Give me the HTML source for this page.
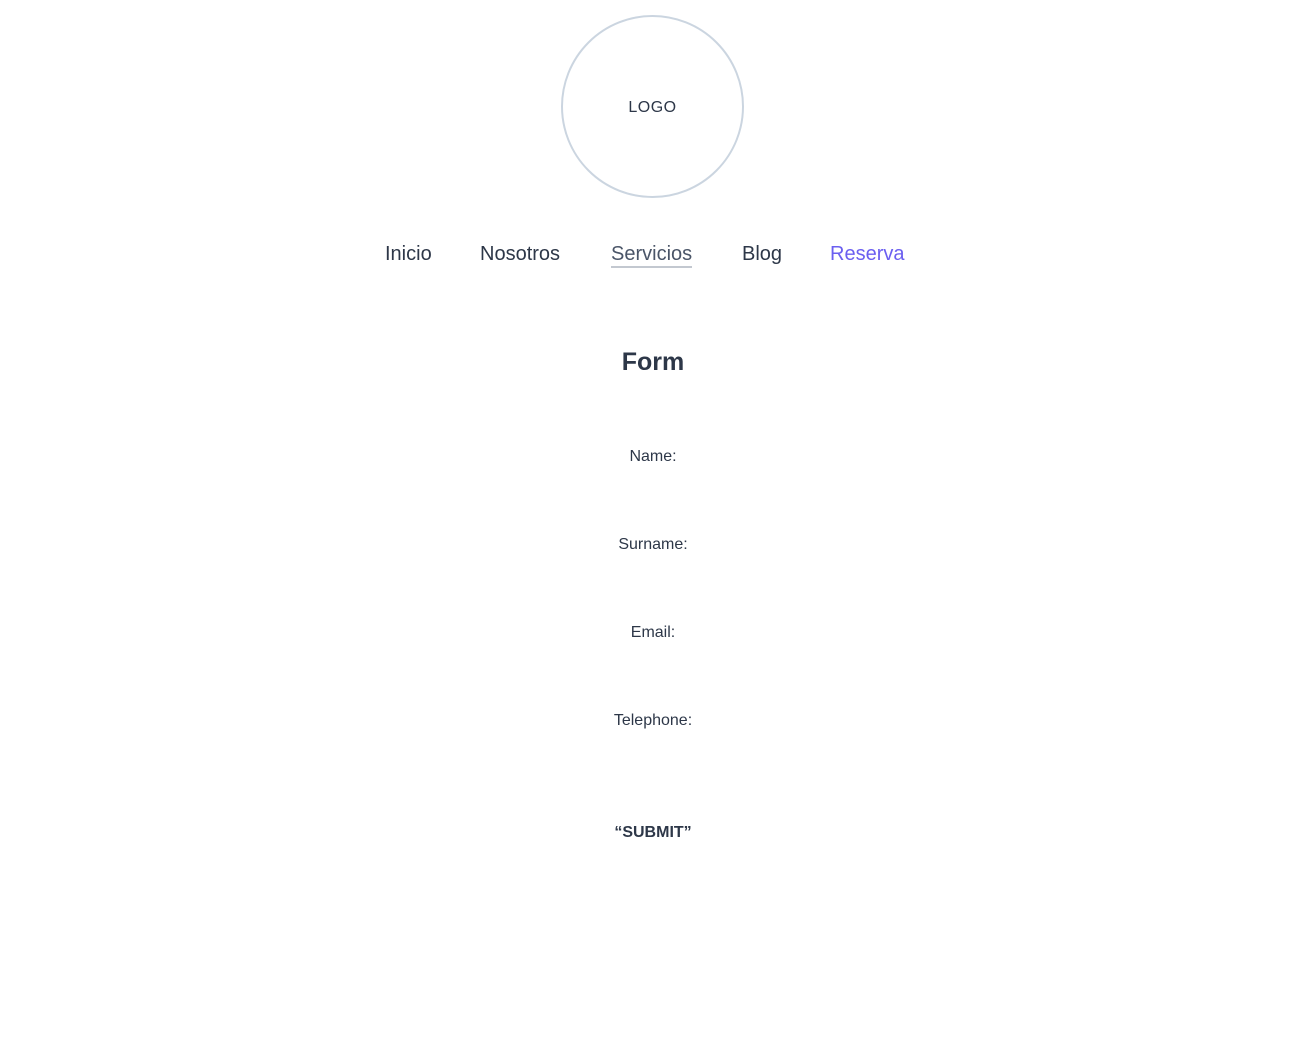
<!DOCTYPE html>
<html><head><meta charset="utf-8"><style>
body{margin:0;width:1312px;height:1060px;background:#fff;font-family:"Liberation Sans","DejaVu Sans",sans-serif;color:#2d3748;position:relative;overflow:hidden}
.a{position:absolute;white-space:nowrap}
.logo{position:absolute;left:561px;top:15px;width:179px;height:179px;border:2px solid #cbd5e0;border-radius:50%;display:flex;align-items:center;justify-content:center;font-size:16px;letter-spacing:0.5px;padding-top:2px;box-sizing:content-box}
.nav{font-size:20px;top:243px}
.c{left:0;width:1306px;text-align:center}
.lbl{font-size:16px}
</style></head><body>
<div class="logo" style="height:177px">LOGO</div>
<div class="a nav" style="left:385px">Inicio</div>
<div class="a nav" style="left:480px">Nosotros</div>
<div class="a nav" style="left:611px;color:#4a5568;border-bottom:2px solid #c3c8d0;padding-bottom:0px">Servicios</div>
<div class="a nav" style="left:742px">Blog</div>
<div class="a nav" style="left:830px;color:#6b5ff0">Reserva</div>
<div class="a c" style="top:348px;font-size:25px;font-weight:bold">Form</div>
<div class="a c lbl" style="top:448px">Name:</div>
<div class="a c lbl" style="top:536px">Surname:</div>
<div class="a c lbl" style="top:624px">Email:</div>
<div class="a c lbl" style="top:712px">Telephone:</div>
<div class="a c" style="top:824px;font-size:16px;font-weight:bold">“SUBMIT”</div>
</body></html>
